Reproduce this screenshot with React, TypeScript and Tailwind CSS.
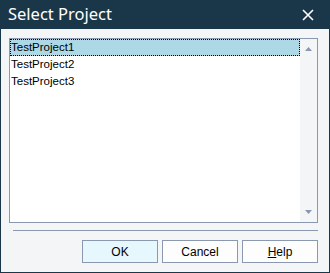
import React from 'react';

const projects = ['TestProject1', 'TestProject2', 'TestProject3'];

const DialogButton: React.FC<{ children: React.ReactNode; primary?: boolean }> = ({ children, primary }) => (
    <button
        className={
            primary
                ? 'w-[76px] h-[23px] border border-[#8a99af] bg-[#e6f7fd] text-[12px] text-black'
                : 'w-[76px] h-[23px] border border-[#8a99af] bg-[#fdfdfd] text-[12px] text-black'
        }
    >
        {children}
    </button>
);

export default function App() {
    return (
        <div
            className="w-[330px] h-[273px] bg-[#1a3649] px-px pb-px flex flex-col"
            style={{ fontFamily: '"Liberation Sans", Arial, sans-serif' }}
        >
            {/* Title bar */}
            <div className="h-[29px] flex items-center justify-between pl-[7px] pr-[15px]">
                <span className="text-[16.5px] text-white" style={{ fontFamily: '"Noto Sans", "Open Sans", sans-serif' }}>
                    Select Project
                </span>
                <svg width="12" height="12" viewBox="0 0 12 12">
                    <path d="M1 1L11 11M11 1L1 11" stroke="white" strokeWidth="1.6" />
                </svg>
            </div>

            {/* Body */}
            <div className="flex-1 bg-[#f3f5f7] pl-[8px] pr-[11px] pt-[9px] flex flex-col">
                {/* List */}
                <div className="h-[185px] border border-[#8a99af] bg-white flex">
                    <div className="flex-1 flex flex-col">
                        {projects.map((p, i) => (
                            <div
                                key={p}
                                className={
                                    i === 0
                                        ? 'h-[17px] flex items-center bg-[#add8e6] border border-dotted border-black text-[11.5px] text-black'
                                        : 'h-[17px] flex items-center pl-px text-[11.5px] text-black'
                                }
                            >
                                {p}
                            </div>
                        ))}
                    </div>
                    <div className="w-[17px] bg-[#f3f5f7] flex flex-col items-center justify-between py-[8px]">
                        <svg width="7" height="4" viewBox="0 0 7 4">
                            <path d="M3.5 0L7 4H0Z" fill="#8a99af" />
                        </svg>
                        <svg width="7" height="4" viewBox="0 0 7 4">
                            <path d="M0 0H7L3.5 4Z" fill="#8a99af" />
                        </svg>
                    </div>
                </div>

                {/* Separator */}
                <div className="mt-[7px] ml-[4px] h-px bg-[#8a99af]" />

                {/* Buttons */}
                <div className="mt-[9px] flex justify-end gap-[4px]">
                    <DialogButton primary>OK</DialogButton>
                    <DialogButton>Cancel</DialogButton>
                    <DialogButton>
                        <span className="underline">H</span>elp
                    </DialogButton>
                </div>
            </div>
        </div>
    );
}
